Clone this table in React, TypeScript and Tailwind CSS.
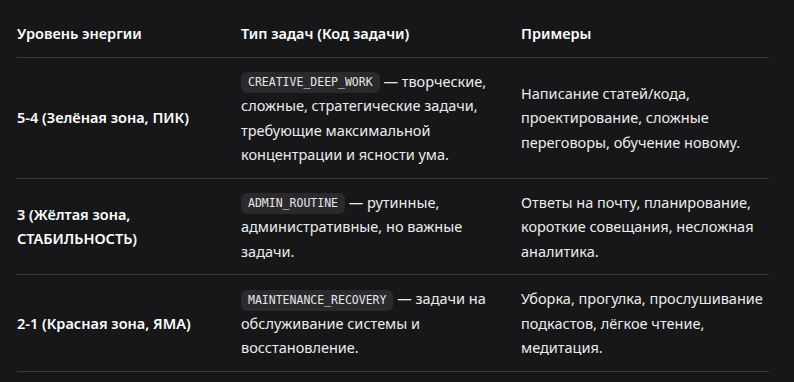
const rows = [
  {
    level: '5-4 (Зелёная зона, ПИК)',
    code: 'CREATIVE_DEEP_WORK',
    desc: 'творческие, сложные, стратегические задачи, требующие максимальной концентрации и ясности ума.',
    examples: 'Написание статей/кода, проектирование, сложные переговоры, обучение новому.',
  },
  {
    level: '3 (Жёлтая зона, СТАБИЛЬНОСТЬ)',
    code: 'ADMIN_ROUTINE',
    desc: 'рутинные, административные, но важные задачи.',
    examples: 'Ответы на почту, планирование, короткие совещания, несложная аналитика.',
  },
  {
    level: '2-1 (Красная зона, ЯМА)',
    code: 'MAINTENANCE_RECOVERY',
    desc: 'задачи на обслуживание системы и восстановление.',
    examples: 'Уборка, прогулка, прослушивание подкастов, лёгкое чтение, медитация.',
  },
];

export default function App() {
  return (
    <div className="min-h-[382px] w-full bg-[#171719] pt-[10px] pl-[17px] text-[14.5px] leading-[24.5px] text-[#ececec] font-['Noto_Sans',sans-serif]">
      <div className="w-[752px]">
        {/* Header */}
        <div className="grid grid-cols-[224px_280px_248px] border-b border-[#3a3a3c] py-[11px] font-semibold text-white">
          <div className="pr-6">Уровень энергии</div>
          <div className="pr-6">Тип задач (Код задачи)</div>
          <div>Примеры</div>
        </div>

        {rows.map((row) => (
          <div
            key={row.code}
            className="grid grid-cols-[224px_280px_248px] items-center border-b border-[#3a3a3c] py-[11px]"
          >
            <div className="pr-6 font-semibold text-white">{row.level}</div>
            <div className="pr-6">
              <code className="inline-block rounded-md bg-[#2a2a2d] px-[7px] py-[3px] align-middle text-[11.5px] leading-[15px] font-['DejaVu_Sans_Mono',monospace] text-[#e6e6e6]">
                {row.code}
              </code>{' '}
              — {row.desc}
            </div>
            <div>{row.examples}</div>
          </div>
        ))}
      </div>
    </div>
  );
}
